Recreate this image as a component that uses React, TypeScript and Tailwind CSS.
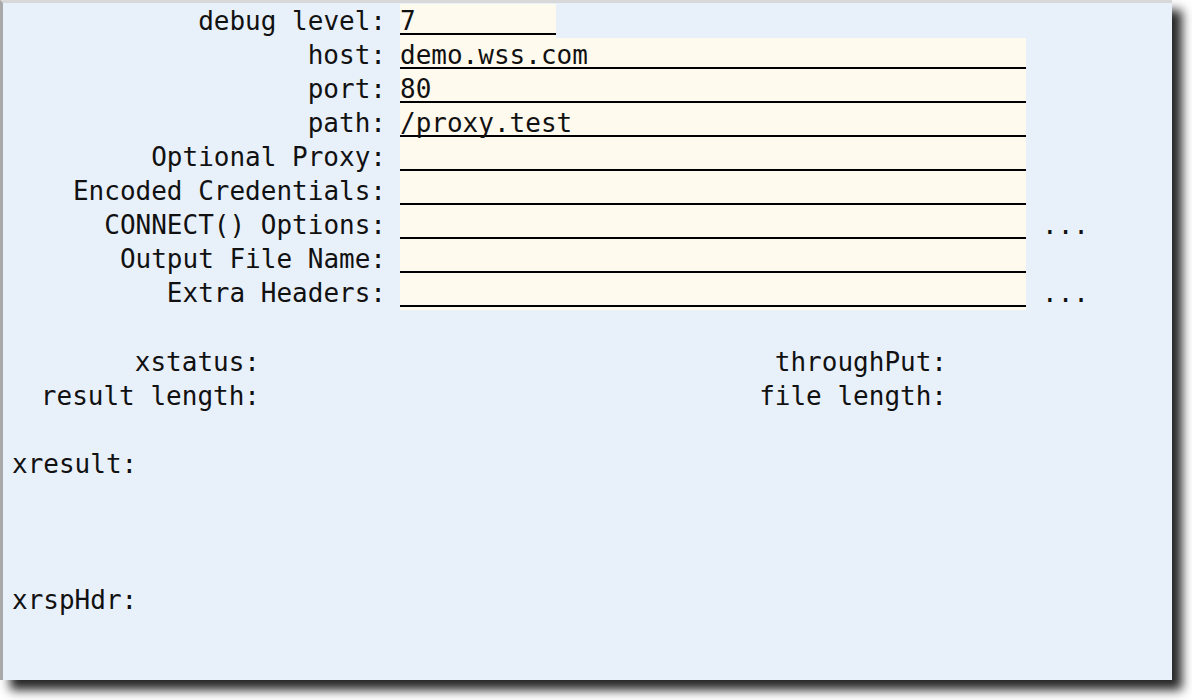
import React from "react";

const rows = [
  { label: "debug level:", value: "7", short: true },
  { label: "host:", value: "demo.wss.com" },
  { label: "port:", value: "80" },
  { label: "path:", value: "/proxy.test" },
  { label: "Optional Proxy:", value: "" },
  { label: "Encoded Credentials:", value: "" },
  { label: "CONNECT() Options:", value: "", more: true },
  { label: "Output File Name:", value: "" },
  { label: "Extra Headers:", value: "", more: true },
];

const App = () => {
  return (
    <div className="min-h-[700px] bg-white font-['DejaVu_Sans_Mono',monospace] text-[26px] text-[#111] whitespace-pre">
      <div className="w-[1172px] h-[680px] bg-[#e8f0fa] border-t-[3px] border-t-[#d8d8d8] border-l-[3px] border-l-[#a9a9a9] shadow-[10px_10px_10px_rgba(0,0,0,0.85)] pt-px">
        {/* request form */}
        <div className="grid grid-cols-[397px_626px_auto]">
          {rows.map((r) => (
            <React.Fragment key={r.label}>
              <div className="h-[34px] pr-[14px] text-right leading-[31px] pt-[2px]">{r.label}</div>
              <div className={"h-[34px] bg-[#fffaee] " + (r.short ? "w-[156px]" : "w-[626px]")}>
                <div className="h-[31px] border-b-2 border-black leading-[31px] pt-[2px]">{r.value}</div>
              </div>
              <div className="h-[34px] pl-[16px] leading-[31px] pt-[2px]">{r.more ? "..." : ""}</div>
            </React.Fragment>
          ))}
        </div>

        {/* status */}
        <div className="mt-[36px] grid grid-cols-[257px_487px_200px]">
          <div className="h-[34px] text-right leading-[31px] pt-px">xstatus:</div>
          <div></div>
          <div className="h-[34px] text-right leading-[31px] pt-px">throughPut:</div>
          <div className="h-[34px] text-right leading-[31px] pt-px">result length:</div>
          <div></div>
          <div className="h-[34px] text-right leading-[31px] pt-px">file length:</div>
        </div>

        <div className="mt-[34px] h-[136px] pl-[9px] leading-[31px] pt-px">xresult:</div>
        <div className="h-[34px] pl-[9px] leading-[31px] pt-px">xrspHdr:</div>
      </div>
    </div>
  );
};

export default App;
